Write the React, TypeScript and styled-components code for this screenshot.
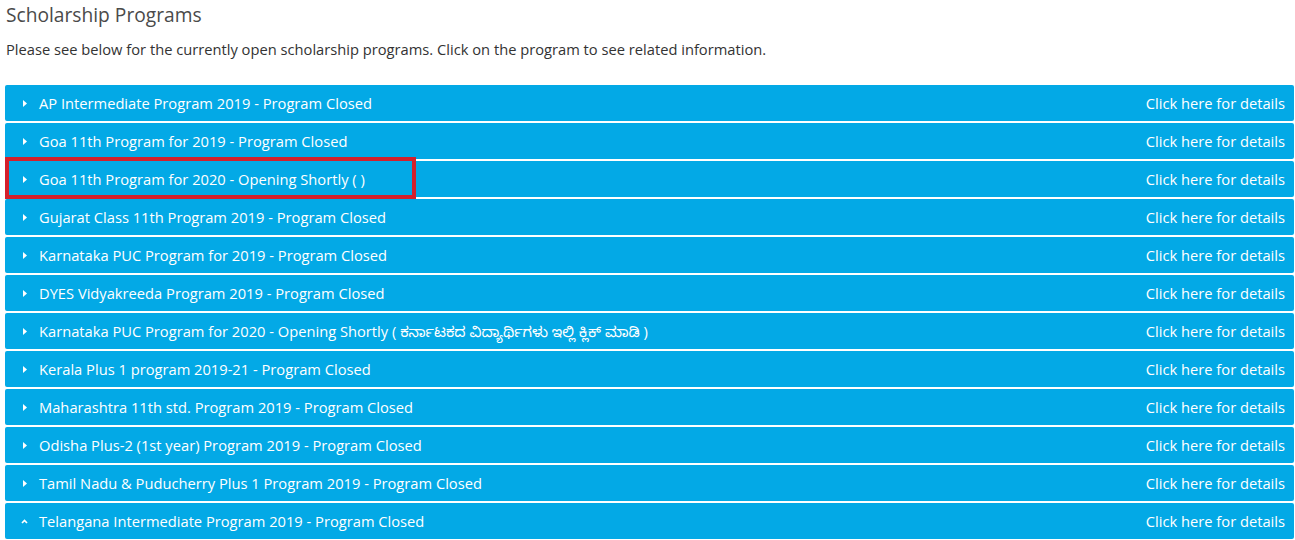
import React from "react";
import styled, { createGlobalStyle } from "styled-components";

interface Program {
  name: string;
  open?: boolean;
  highlight?: boolean;
}

const programs: Program[] = [
  { name: "AP Intermediate Program 2019 - Program Closed" },
  { name: "Goa 11th Program for 2019 - Program Closed" },
  { name: "Goa 11th Program for 2020 - Opening Shortly ( )", highlight: true },
  { name: "Gujarat Class 11th Program 2019 - Program Closed" },
  { name: "Karnataka PUC Program for 2019 - Program Closed" },
  { name: "DYES Vidyakreeda Program 2019 - Program Closed" },
  { name: "Karnataka PUC Program for 2020 - Opening Shortly ( ಕರ್ನಾಟಕದ ವಿದ್ಯಾರ್ಥಿಗಳು ಇಲ್ಲಿ ಕ್ಲಿಕ್ ಮಾಡಿ )" },
  { name: "Kerala Plus 1 program 2019-21 - Program Closed" },
  { name: "Maharashtra 11th std. Program 2019 - Program Closed" },
  { name: "Odisha Plus-2 (1st year) Program 2019 - Program Closed" },
  { name: "Tamil Nadu & Puducherry Plus 1 Program 2019 - Program Closed" },
  { name: "Telangana Intermediate Program 2019 - Program Closed", open: true },
];

const GlobalStyle = createGlobalStyle`
  body {
    margin: 0;
    background: #fff;
    font-family: "Open Sans", "Noto Sans", "Noto Sans Kannada", sans-serif;
  }
`;

const Page = styled.div`
  padding: 3px 1px 0 5px;
  height: 540px;
  overflow: hidden;
  box-sizing: border-box;
`;

const Title = styled.h1`
  margin: 0 0 0 1px;
  font-size: 19.2px;
  font-weight: 400;
  line-height: 24px;
  color: #4a4a4a;
`;

const Intro = styled.p`
  margin: 12px 0 26px 1px;
  font-size: 14.7px;
  line-height: 20px;
  color: #333;
`;

const List = styled.div`
  display: flex;
  flex-direction: column;
  gap: 2px;
`;

const Row = styled.div`
  position: relative;
  display: flex;
  align-items: center;
  justify-content: space-between;
  height: 36px;
  padding: 0 9px 0 15px;
  background: #03a9e6;
  color: #fff;
  border-radius: 2px;
  font-size: 14.7px;
  line-height: 20px;
  cursor: pointer;
`;

const Label = styled.div`
  display: flex;
  align-items: center;
  gap: 10px;
  white-space: nowrap;
`;

const Caret = styled.svg`
  width: 9px;
  height: 9px;
  flex-shrink: 0;
`;

const Details = styled.span`
  white-space: nowrap;
`;

const Highlight = styled.div`
  position: absolute;
  left: 0;
  top: -4px;
  width: 411px;
  height: 42px;
  border: 4px solid #d4202c;
  box-sizing: border-box;
  pointer-events: none;
`;

const Arrow: React.FC<{ open?: boolean }> = ({ open }) =>
  open ? (
    <Caret viewBox="0 0 9 9">
      <path d="M2 6 L4.5 3.5 L7 6" stroke="#fff" strokeWidth="1.7" fill="none" />
    </Caret>
  ) : (
    <Caret viewBox="0 0 9 9">
      <path d="M3 1 L7 4.5 L3 8 Z" fill="#fff" />
    </Caret>
  );

export default function App() {
  return (
    <>
      <GlobalStyle />
      <Page>
        <Title>Scholarship Programs</Title>
        <Intro>
          Please see below for the currently open scholarship programs. Click on the program to see related
          information.
        </Intro>
        <List>
          {programs.map((p) => (
            <Row key={p.name}>
              <Label>
                <Arrow open={p.open} />
                {p.name}
              </Label>
              <Details>Click here for details</Details>
              {p.highlight && <Highlight />}
            </Row>
          ))}
        </List>
      </Page>
    </>
  );
}
